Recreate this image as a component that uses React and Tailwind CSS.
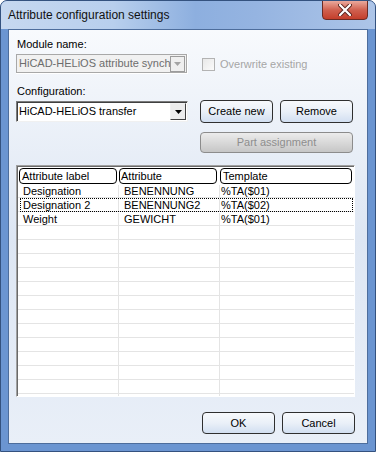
import React from 'react'

const rows = [
  { label: 'Designation', attr: 'BENENNUNG', tpl: '%TA($01)' },
  { label: 'Designation 2', attr: 'BENENNUNG2', tpl: '%TA($02)', focus: true },
  { label: 'Weight', attr: 'GEWICHT', tpl: '%TA($01)' },
]

function DropArrow({ color }) {
  return (
    <svg width="7" height="4" viewBox="0 0 7 4">
      <path d="M0 0h7L3.5 4z" fill={color} />
    </svg>
  )
}

function Button({ children, className = '' }) {
  return (
    <div
      className={
        'flex items-center justify-center rounded-[4px] border border-[#2f2f2f] bg-gradient-to-b from-[#f7f9fc] via-[#eaf0f8] to-[#d2dff1] text-black ' +
        className
      }
    >
      {children}
    </div>
  )
}

export default function App() {
  const empty = Array.from({ length: 13 })
  return (
    <div
      className="relative flex h-[452px] w-[376px] flex-col overflow-hidden rounded-t-[7px] border border-[#34527f] bg-[#6b95d1] text-[11px] leading-[13px]"
      style={{ fontFamily: '"Liberation Sans", Arial, sans-serif' }}
    >
      <div className="flex h-[28px] shrink-0 items-center bg-[linear-gradient(90deg,#c6d8f0_0%,#b8cfed_30%,#8dafdf_52%,#95b4e1_68%,#adc5e8_100%)] pl-[7px]">
        <span className="text-[12px] text-[#111]">Attribute configuration settings</span>
      </div>

      <div className="absolute right-[7px] top-[-1px] flex h-[20px] w-[46px] items-center justify-center rounded-b-[4px] border border-[#6b2b24] bg-gradient-to-b from-[#e9a99d] via-[#d0604f] to-[#c43e2a]">
        <svg width="14" height="12" viewBox="0 0 14 12">
          <path d="M2 1l10 10M12 1L2 11" stroke="#5a2620" strokeWidth="4" strokeLinecap="round" />
          <path d="M2 1l10 10M12 1L2 11" stroke="#ffffff" strokeWidth="2.2" strokeLinecap="round" />
        </svg>
      </div>

      <div className="flex flex-1 flex-col px-[7px] pb-[7px]">
        <div className="flex flex-1 flex-col border border-[#4d6d9c] bg-gradient-to-b from-[#f8fafd] via-[#dde6f3] to-[#e9eff8] px-[7px] pt-[8px]">
          <div className="ml-[1px] h-[13px]">Module name:</div>
          <div className="mt-[3px] flex items-center">
            <div className="flex h-[20px] w-[172px] items-center border-b border-r border-white">
              <div className="flex h-full min-w-0 flex-1 items-center border border-[#a8a8a8] bg-[#f1f1f1] pl-[2px]">
                <span className="min-w-0 flex-1 overflow-hidden whitespace-nowrap text-[#6d6d6d]">
                  HiCAD-HELiOS attribute synchronization
                </span>
                <div className="mr-[1px] flex h-[16px] w-[15px] shrink-0 items-center justify-center border border-[#9c9c9c] bg-[#efefef]">
                  <DropArrow color="#a3a3a3" />
                </div>
              </div>
            </div>
            <div className="ml-[14px] h-[13px] w-[13px] shrink-0 border border-[#b3b3b3] bg-gradient-to-br from-[#e8e8e8] to-[#fbfbfb]" />
            <span className="ml-[5px] whitespace-nowrap text-[#a6a6a6]">Overwrite existing</span>
          </div>

          <div className="flex items-end">
            <div className="flex w-[172px] flex-col">
              <div className="ml-[1px] mt-[11px] h-[13px]">Configuration:</div>
              <div className="mt-[3px] flex h-[21px] items-center border border-b-[#f0f0f0] border-l-[#7a7a7a] border-r-[#f0f0f0] border-t-[#7a7a7a] bg-white pl-[2px] shadow-[inset_1px_1px_0_#404040]">
                <span className="min-w-0 flex-1 whitespace-nowrap text-black">HiCAD-HELiOS transfer</span>
                <div className="mr-[1px] flex h-[17px] w-[16px] shrink-0 items-center justify-center border border-b-[#404040] border-l-[#f0f0f0] border-r-[#404040] border-t-[#f0f0f0] bg-[#ececec]">
                  <DropArrow color="#000" />
                </div>
              </div>
            </div>
            <div className="mb-[-1px] ml-[12px] flex gap-[7px]">
              <Button className="h-[23px] w-[73px]">Create new</Button>
              <Button className="h-[23px] w-[73px]">Remove</Button>
            </div>
          </div>

          <div className="ml-[184px] mt-[10px] flex h-[21px] w-[153px] items-center justify-center rounded-[4px] border border-[#8c8c8c] bg-gradient-to-b from-[#ececec] to-[#c6c6c6] text-[#8e8e8e]">
            Part assignment
          </div>

          <div className="mt-[12px] h-[232px] w-[339px] border border-b-white border-l-[#a0a0a0] border-r-white border-t-[#a0a0a0]">
            <div className="h-full overflow-hidden border-l border-t border-[#696969] bg-white">
              <div className="flex h-[17px] gap-[2px] pl-[1px] pt-[1px]">
                <div className="h-[16px] w-[98px] rounded-[4px] border border-black bg-white pl-[2px] leading-[14px]">Attribute label</div>
                <div className="h-[16px] w-[98px] rounded-[4px] border border-black bg-white pl-[1px] leading-[14px]">Attribute</div>
                <div className="ml-[1px] h-[16px] w-[132px] rounded-[4px] border border-black bg-white pl-[2px] leading-[14px]">Template</div>
              </div>
              {rows.map((r) => (
                <div key={r.label} className="relative grid h-[14px] grid-cols-[101px_101px_1fr] border-b border-[#e4e4e4] pt-[1px] leading-[13px]">
                  <div className="border-r border-[#e4e4e4] pl-[5px]">{r.label}</div>
                  <div className="border-r border-[#e4e4e4] pl-[5px]">{r.attr}</div>
                  <div className="pl-[1px]">{r.tpl}</div>
                  {r.focus && (
                    <div className="absolute bottom-[-1px] left-[2px] right-[1px] top-0 border border-dotted border-black" />
                  )}
                </div>
              ))}
              {empty.map((_, i) => (
                <div key={i} className="grid h-[14px] grid-cols-[101px_101px_1fr] border-b border-[#e4e4e4]">
                  <div className="border-r border-[#e4e4e4]" />
                  <div className="border-r border-[#e4e4e4]" />
                  <div />
                </div>
              ))}
            </div>
          </div>

          <div className="ml-[186px] mt-[15px] flex gap-[7px]">
            <Button className="h-[22px] w-[73px]">OK</Button>
            <Button className="h-[22px] w-[73px]">Cancel</Button>
          </div>
        </div>
      </div>
    </div>
  )
}
